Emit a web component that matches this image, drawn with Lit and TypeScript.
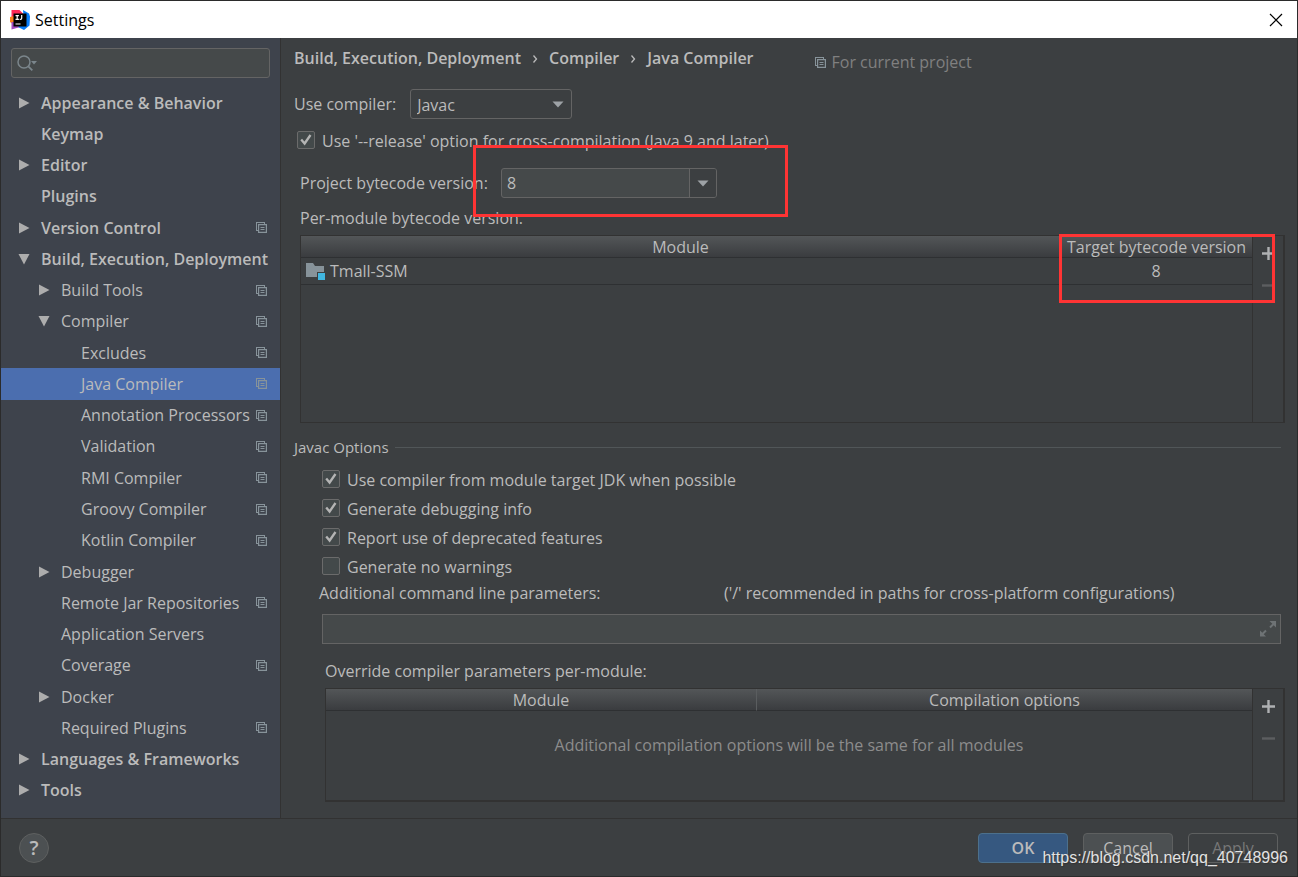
import { LitElement, html, css, svg, nothing } from "lit";
import { customElement, property } from "lit/decorators.js";
import { classMap } from "lit/directives/class-map.js";

interface Entry {
  label: string;
  level: 0 | 1 | 2;
  arrow?: "open" | "closed";
  project?: boolean;
  selected?: boolean;
}

const ENTRIES: Entry[] = [
  { label: "Appearance & Behavior", level: 0, arrow: "closed" },
  { label: "Keymap", level: 0 },
  { label: "Editor", level: 0, arrow: "closed" },
  { label: "Plugins", level: 0 },
  { label: "Version Control", level: 0, arrow: "closed", project: true },
  { label: "Build, Execution, Deployment", level: 0, arrow: "open" },
  { label: "Build Tools", level: 1, arrow: "closed", project: true },
  { label: "Compiler", level: 1, arrow: "open", project: true },
  { label: "Excludes", level: 2, project: true },
  { label: "Java Compiler", level: 2, project: true, selected: true },
  { label: "Annotation Processors", level: 2, project: true },
  { label: "Validation", level: 2, project: true },
  { label: "RMI Compiler", level: 2, project: true },
  { label: "Groovy Compiler", level: 2, project: true },
  { label: "Kotlin Compiler", level: 2, project: true },
  { label: "Debugger", level: 1, arrow: "closed" },
  { label: "Remote Jar Repositories", level: 1, project: true },
  { label: "Application Servers", level: 1 },
  { label: "Coverage", level: 1, project: true },
  { label: "Docker", level: 1, arrow: "closed" },
  { label: "Required Plugins", level: 1, project: true },
  { label: "Languages & Frameworks", level: 0, arrow: "closed" },
  { label: "Tools", level: 0, arrow: "closed" },
];

const projectIcon = html`<svg class="project-icon" width="11" height="11" viewBox="0 0 11 11" aria-hidden="true">
  <path d="M0 0h9v2H8V1H1v7h1v1H0z" fill="#87939a" />
  <path d="M2 2h9v9H2zM3.200 3.200v6.600h6.600v-6.600z" fill="#87939a" fill-rule="evenodd" />
  <path d="M4.500 5h4v1h-4zM4.500 7h4v1h-4z" fill="#87939a" />
</svg>`;

const dropArrow = html`<svg class="drop-arrow" width="12" height="7" viewBox="0 0 12 7" aria-hidden="true">
  <path d="M.5 .5h11L6 6.500z" fill="#9da2a6" />
</svg>`;

const treeArrow = (kind?: "open" | "closed") =>
  html`<svg class="tree-arrow" width="12" height="12" viewBox="0 0 12 12" aria-hidden="true">
    ${kind === "open"
      ? svg`<path d="M.5 1h11L6 11.500z" fill="#adadad" />`
      : kind === "closed"
        ? svg`<path d="M1 .5v11L11.500 6z" fill="#adadad" />`
        : nothing}
  </svg>`;

@customElement("settings-tree")
class SettingsTree extends LitElement {
  static styles = css`
    :host {
      display: flex;
      flex-direction: column;
      box-sizing: border-box;
      padding: 10px 0 12px;
      background: #3e434c;
      border-right: 1px solid #323232;
    }
    .search {
      display: flex;
      align-items: center;
      box-sizing: border-box;
      height: 30px;
      margin: 0 10px 9px;
      padding: 0 5px;
      border: 1px solid #646464;
      border-radius: 3px;
      background: #45494a;
    }
    .search input {
      flex: 1;
      min-width: 0;
      border: 0;
      outline: 0;
      background: none;
      color: #bbbbbb;
      font: 16px "Open Sans", sans-serif;
    }
    .tree {
      flex: 1;
      display: grid;
      grid-template-columns: minmax(0, 1fr);
      grid-auto-rows: 1fr;
      margin: 0;
      padding: 0;
      list-style: none;
    }
    .entry {
      display: flex;
      align-items: center;
      gap: 11px;
      padding: 0 13px 0 17px;
      min-height: 24px;
      color: #bbbbbb;
      text-decoration: none;
      white-space: nowrap;
      font-size: 16px;
      line-height: 24px;
    }
    .level-0 {
      font-weight: 600;
    }
    .level-1 {
      padding-left: 37px;
    }
    .level-2 {
      padding-left: 57px;
    }
    .selected {
      background: #4b6eaf;
    }
    .tree-arrow,
    .project-icon {
      flex: none;
    }
    .label {
      flex: 1;
      min-width: 0;
    }
    li {
      display: grid;
      grid-template-columns: minmax(0, 1fr);
    }
  `;

  render() {
    return html`
      <div class="search">
        <svg width="21" height="18" viewBox="0 0 21 18" fill="none" aria-hidden="true">
          <circle cx="7" cy="8" r="6" stroke="#7b868c" stroke-width="1.500" />
          <path d="M11.300 12.300l4 4" stroke="#7b868c" stroke-width="1.800" />
          <path d="M14 7h6l-3 3.500z" fill="#7b868c" />
        </svg>
        <input type="text" aria-label="Search settings" />
      </div>
      <ul class="tree">
        ${ENTRIES.map(
          (e) => html`<li>
            <a
              href="#"
              class=${classMap({ entry: true, [`level-${e.level}`]: true, selected: !!e.selected })}
            >
              ${treeArrow(e.arrow)}<span class="label">${e.label}</span>${e.project ? projectIcon : nothing}
            </a>
          </li>`,
        )}
      </ul>
    `;
  }
}

@customElement("check-option")
class CheckOption extends LitElement {
  @property() label = "";
  @property({ type: Boolean }) checked = false;

  static styles = css`
    :host {
      display: block;
    }
    label {
      display: flex;
      align-items: center;
      gap: 7px;
      line-height: 24px;
    }
    .box {
      display: grid;
      flex: none;
      margin-bottom: 2px;
    }
    .box > * {
      grid-area: 1 / 1;
    }
    input {
      appearance: none;
      box-sizing: border-box;
      width: 18px;
      height: 18px;
      margin: 0;
      border: 1px solid #6b6b6b;
      border-radius: 2px;
      background: #43494a;
    }
    svg {
      pointer-events: none;
    }
  `;

  render() {
    return html`<label>
      <span class="box">
        <input type="checkbox" .checked=${this.checked} />
        ${this.checked
          ? html`<svg width="18" height="18" viewBox="0 0 18 18" fill="none" aria-hidden="true">
              <path d="M4.200 8.500L7.600 12.500L13.500 4" stroke="#b4b4b4" stroke-width="2.300" />
            </svg>`
          : nothing}
      </span>
      <span>${this.label}</span>
    </label>`;
  }
}

@customElement("table-tools")
class TableTools extends LitElement {
  static styles = css`
    :host {
      display: flex;
      flex-direction: column;
      box-sizing: border-box;
      flex: none;
      width: 31px;
      padding-top: 1px;
      border-left: 1px solid #323232;
    }
    button {
      display: grid;
      place-items: center;
      width: 31px;
      height: 32px;
      padding: 0;
      border: 0;
      background: none;
      color: #afb1b3;
    }
    button:disabled {
      color: #5c5e60;
    }
  `;

  render() {
    return html`
      <button aria-label="Add">
        <svg width="13" height="13" viewBox="0 0 13 13"><path d="M5.300 0h2.400v5.300H13v2.400H7.700V13H5.300V7.700H0V5.300h5.300z" fill="currentColor" /></svg>
      </button>
      <button aria-label="Remove" disabled>
        <svg width="13" height="13" viewBox="0 0 13 13"><path d="M0 5.300h13v2.400H0z" fill="currentColor" /></svg>
      </button>
    `;
  }
}

@customElement("app-root")
class AppRoot extends LitElement {
  static styles = css`
    :host {
      display: flex;
      flex-direction: column;
      box-sizing: border-box;
      position: relative;
      min-height: 100vh;
      border: 1px solid #2b2b2b;
      background: #3c3f41;
      color: #bbbbbb;
      font-family: "Open Sans", sans-serif;
      font-size: 16px;
      line-height: 24px;
    }
    .titlebar {
      display: flex;
      align-items: center;
      gap: 5px;
      height: 37px;
      padding: 0 14px 0 9px;
      background: #ffffff;
      color: #000000;
    }
    .titlebar h1 {
      flex: 1;
      margin: 0;
      font-size: 16px;
      font-weight: normal;
    }
    .titlebar button {
      display: grid;
      padding: 0;
      border: 0;
      background: none;
    }
    .body {
      flex: 1;
      display: grid;
      grid-template-columns: 280px minmax(0, 1fr);
    }
    main {
      display: flex;
      flex-direction: column;
      padding: 0 12px 16px 13px;
    }
    .heading {
      display: flex;
      gap: 61px;
      height: 41px;
      margin-bottom: 10px;
      line-height: 41px;
    }
    .crumbs {
      display: flex;
      gap: 11px;
      margin: 0;
      padding: 0;
      list-style: none;
      font-weight: 600;
    }
    .crumbs li {
      display: flex;
      align-items: center;
      gap: 11px;
    }
    .scope {
      display: flex;
      align-items: center;
      gap: 6px;
      padding-top: 8px;
      color: #808080;
    }
    .row {
      display: flex;
      align-items: center;
    }
    .compiler {
      gap: 14px;
      margin-bottom: 10px;
    }
    .select {
      display: grid;
      align-items: center;
      width: 162px;
    }
    .select > * {
      grid-area: 1 / 1;
    }
    .select .drop-arrow {
      justify-self: end;
      margin-right: 8px;
      pointer-events: none;
    }
    select {
      appearance: none;
      box-sizing: border-box;
      width: 100%;
      height: 30px;
      padding: 2px 6px 0;
      border: 1px solid #646464;
      border-radius: 3px;
      background: #3c3f41;
      color: inherit;
      font: inherit;
    }
    .release {
      margin-left: 3px;
    }
    .version {
      position: relative;
      gap: 13px;
      margin: 15px 0 8px 6px;
    }
    .combo {
      display: flex;
      box-sizing: border-box;
      width: 216px;
      height: 30px;
      border: 1px solid #646464;
      border-radius: 3px;
      background: #45494a;
      overflow: hidden;
    }
    .combo input {
      flex: 1;
      min-width: 0;
      padding: 0 5px;
      border: 0;
      outline: 0;
      background: none;
      color: inherit;
      font: inherit;
    }
    .combo button {
      display: grid;
      place-items: center;
      width: 27px;
      padding: 0;
      border: 0;
      border-left: 1px solid #646464;
      background: #3c3f41;
    }
    .caption {
      margin: 0 0 5px 6px;
    }
    .table-box {
      position: relative;
      display: flex;
      box-sizing: border-box;
      border: 1px solid #323232;
      border-right-width: 2px;
    }
    .modules {
      flex: 1;
      min-height: 186px;
      margin: 0 0 12px 6px;
    }
    .overrides {
      height: 114px;
      margin-left: 31px;
      border-bottom-width: 2px;
    }
    .table-area {
      flex: 1;
    }
    table {
      width: 100%;
      table-layout: fixed;
      border-collapse: separate;
      border-spacing: 0;
    }
    th {
      padding: 2px 0 0;
      border-bottom: 1px solid #2e3032;
      background: linear-gradient(#535658, #3a3c3f);
      font-weight: normal;
      line-height: 19px;
      white-space: nowrap;
    }
    th + th {
      border-left: 1px solid #5a5d5f;
    }
    td {
      padding: 0;
    }
    .modules td {
      height: 26px;
      border-bottom: 1px solid #2e3032;
    }
    .target-col {
      width: 192px;
    }
    .module-col {
      width: 430px;
    }
    .module-name {
      display: flex;
      align-items: center;
      gap: 4px;
      padding-left: 5px;
    }
    .center {
      text-align: center;
    }
    .empty {
      padding-top: 22px;
      color: #8c8c8c;
      text-align: center;
    }
    .mark {
      position: absolute;
      box-sizing: border-box;
      border: 3px solid #ff3434;
      pointer-events: none;
    }
    .mark-version {
      left: 173px;
      top: -23px;
      width: 315px;
      height: 72px;
    }
    .mark-target {
      right: 8px;
      top: -2px;
      width: 216px;
      height: 69px;
    }
    .group {
      display: flex;
      align-items: center;
      gap: 6px;
      margin: 0 4px 7px 0;
    }
    .group h2 {
      margin: 0;
      font-size: 15px;
      font-weight: normal;
    }
    .group hr {
      flex: 1;
      margin: 0;
      border: 0;
      border-top: 1px solid #515658;
    }
    .options {
      display: grid;
      grid-auto-rows: 1fr;
      align-items: center;
      height: 115px;
      margin-left: 28px;
    }
    .params {
      display: grid;
      grid-template-columns: 405px 1fr;
      margin: 0 0 9px 25px;
    }
    .long-field {
      display: flex;
      align-items: center;
      box-sizing: border-box;
      height: 30px;
      margin: 0 4px 15px 28px;
      padding: 0 4px 0 5px;
      border: 1px solid #646464;
      background: #45494a;
    }
    .long-field input {
      flex: 1;
      border: 0;
      outline: 0;
      background: none;
      color: inherit;
      font: inherit;
    }
    .long-field button {
      display: grid;
      padding: 0;
      border: 0;
      background: none;
    }
    .caption.inner {
      margin-left: 31px;
    }
    footer {
      display: flex;
      align-items: center;
      gap: 15px;
      height: 57px;
      padding: 0 19px 0 18px;
      border-top: 1px solid #323232;
    }
    footer button {
      box-sizing: border-box;
      width: 90px;
      height: 30px;
      padding: 0;
      border: 1px solid #5e6060;
      border-radius: 4px;
      background: #4c5052;
      color: #bbbbbb;
      font: inherit;
    }
    footer .ok {
      border-color: #4c708c;
      background: #365880;
      font-weight: 600;
    }
    footer .apply {
      background: none;
      color: #777777;
    }
    footer .help {
      width: 30px;
      margin-right: auto;
      border-radius: 50%;
      font-size: 20px;
      font-weight: 600;
      line-height: 24px;
    }
    .watermark {
      position: absolute;
      right: 9px;
      bottom: 6px;
      color: #e2e2e2;
      font-family: "Liberation Sans", sans-serif;
      font-size: 16px;
      text-shadow: 1px 1px 1px #333333;
    }
  `;

  render() {
    return html`
      <header class="titlebar">
        <svg width="20" height="20" viewBox="0 0 20 20" aria-hidden="true">
          <path d="M1.500 0h8l4 4-9 8-3-4z" fill="#fe2857" />
          <path d="M0 7l4-1v9l-4-3z" fill="#fc801d" />
          <path d="M1.500 12h7l2 5-9 2.500z" fill="#a04ac0" />
          <path d="M13 0l6 3.500 1 3-.5 9L14 20l-6-3 6-6z" fill="#087cfa" />
          <path d="M3.500 3.500h13v13h-13z" fill="#000000" />
          <path d="M5.500 5.600h3.400M7.200 5.600v4M5.500 9.400h3.400M11.700 5v3.200q0 1.200-1.200 1.200h-.8M5.500 14h5" fill="none" stroke="#ffffff" stroke-width="1.200" />
        </svg>
        <h1>Settings</h1>
        <button aria-label="Close">
          <svg width="14" height="14" viewBox="0 0 14 14"><path d="M1 1l12 12M13 1L1 13" stroke="#000000" stroke-width="1.200" /></svg>
        </button>
      </header>

      <div class="body">
        <settings-tree></settings-tree>
        <main>
          <div class="heading">
            <ol class="crumbs">
              <li>Build, Execution, Deployment</li>
              ${["Compiler", "Java Compiler"].map(
                (c) => html`<li>
                  <svg width="6" height="10" viewBox="0 0 6 10" fill="none" aria-hidden="true">
                    <path d="M1.500 1.500L4.500 5 1.500 8.500" stroke="#bbbbbb" stroke-width="1.300" />
                  </svg>
                  ${c}
                </li>`,
              )}
            </ol>
            <div class="scope">${projectIcon}<span>For current project</span></div>
          </div>

          <div class="row compiler">
            <label for="compiler">Use compiler:</label>
            <div class="select">
              <select id="compiler">
                <option>Javac</option>
              </select>
              ${dropArrow}
            </div>
          </div>

          <check-option
            class="release"
            checked
            label="Use '--release' option for cross-compilation (Java 9 and later)"
          ></check-option>

          <div class="row version">
            <label for="version">Project bytecode version:</label>
            <div class="combo">
              <input id="version" type="text" .value=${"8"} />
              <button aria-label="Show versions">${dropArrow}</button>
            </div>
            <div class="mark mark-version"></div>
          </div>

          <div class="caption">Per-module bytecode version:</div>
          <div class="table-box modules">
            <div class="table-area">
              <table>
                <colgroup>
                  <col />
                  <col class="target-col" />
                </colgroup>
                <thead>
                  <tr>
                    <th>Module</th>
                    <th>Target bytecode version</th>
                  </tr>
                </thead>
                <tbody>
                  <tr>
                    <td>
                      <div class="module-name">
                        <svg width="20" height="18" viewBox="0 0 20 18" aria-hidden="true">
                          <path d="M0 1h7l2 3h9v6h-7v5H0z" fill="#87939a" />
                          <path d="M12 11h7v7h-7z" fill="#40b6e0" />
                        </svg>
                        <span>Tmall-SSM</span>
                      </div>
                    </td>
                    <td class="center">8</td>
                  </tr>
                </tbody>
              </table>
            </div>
            <table-tools></table-tools>
            <div class="mark mark-target"></div>
          </div>

          <div class="group">
            <h2>Javac Options</h2>
            <hr />
          </div>
          <div class="options">
            <check-option checked label="Use compiler from module target JDK when possible"></check-option>
            <check-option checked label="Generate debugging info"></check-option>
            <check-option checked label="Report use of deprecated features"></check-option>
            <check-option label="Generate no warnings"></check-option>
          </div>
          <div class="params">
            <label for="params">Additional command line parameters:</label>
            <span>('/' recommended in paths for cross-platform configurations)</span>
          </div>
          <div class="long-field">
            <input id="params" type="text" />
            <button aria-label="Expand">
              <svg width="16" height="16" viewBox="0 0 16 16" fill="#6e7375" aria-hidden="true">
                <path d="M9.500 0H16v6.500l-2.300-2.300-3 3-1.400-1.400 3-3zM0 9.500l2.300 2.300 3-3 1.400 1.400-3 3L6 15.500H0z" />
              </svg>
            </button>
          </div>

          <div class="caption inner">Override compiler parameters per-module:</div>
          <div class="table-box overrides">
            <div class="table-area">
              <table>
                <colgroup>
                  <col class="module-col" />
                  <col />
                </colgroup>
                <thead>
                  <tr>
                    <th>Module</th>
                    <th>Compilation options</th>
                  </tr>
                </thead>
                <tbody>
                  <tr>
                    <td class="empty" colspan="2">Additional compilation options will be the same for all modules</td>
                  </tr>
                </tbody>
              </table>
            </div>
            <table-tools></table-tools>
          </div>
        </main>
      </div>

      <footer>
        <button class="help" aria-label="Help">?</button>
        <button class="ok">OK</button>
        <button>Cancel</button>
        <button class="apply" disabled>Apply</button>
      </footer>
      <div class="watermark">https://blog.csdn.net/qq_40748996</div>
    `;
  }
}
